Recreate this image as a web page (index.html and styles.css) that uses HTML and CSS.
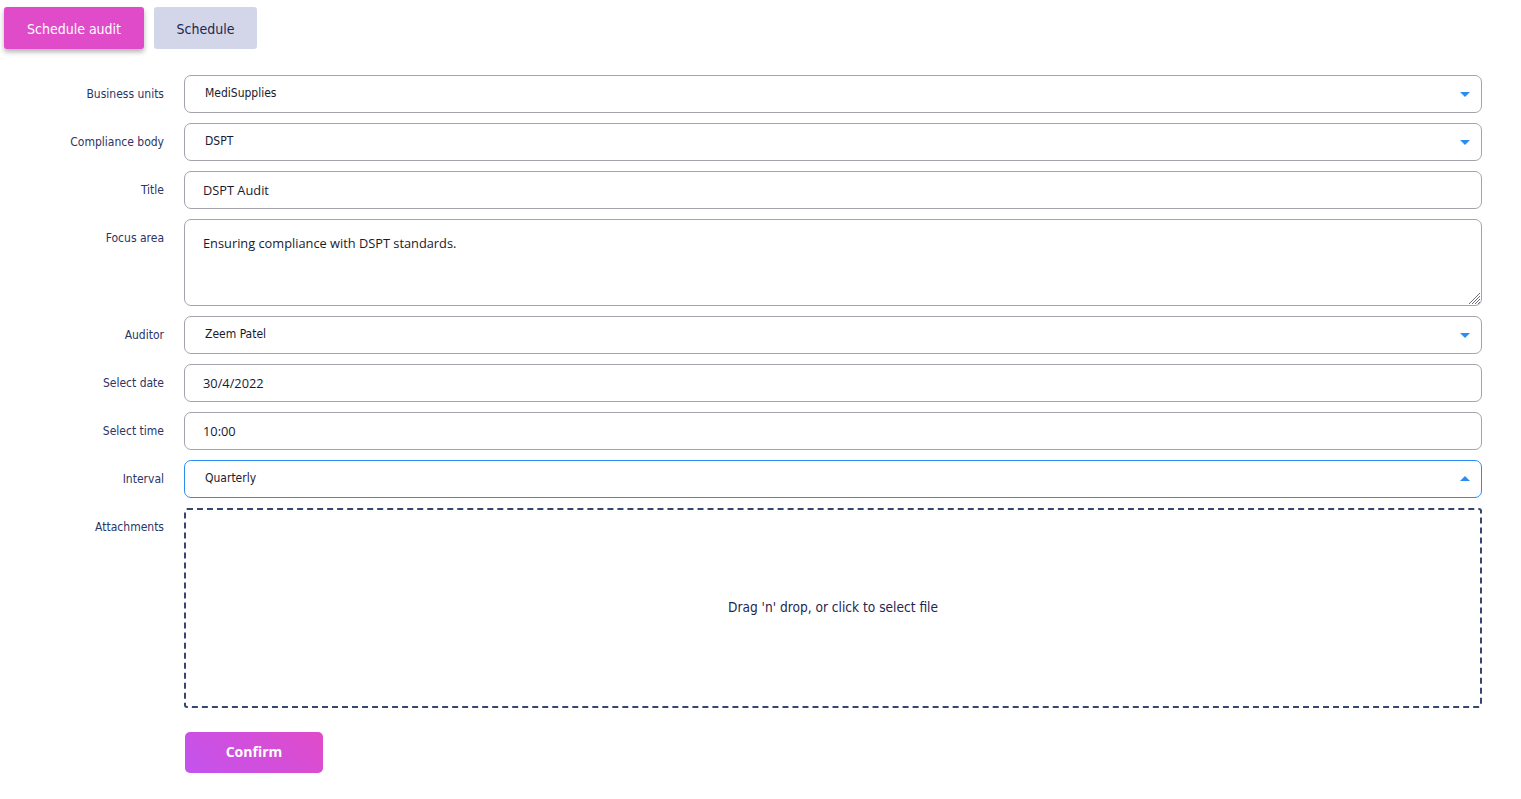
FILE: index.html
```html
<!DOCTYPE html>
<html>
<head>
<meta charset="utf-8">
<link rel="stylesheet" href="styles.css">
</head>
<body>
<div class="page">
  <div class="tabs">
    <button class="tab tab-active">Schedule audit</button>
    <button class="tab">Schedule</button>
  </div>
  <form class="form">
    <div class="row">
      <label class="label">Business units</label>
      <div class="field select"><span class="value">MediSupplies</span><span class="arrow down"></span></div>
    </div>
    <div class="row">
      <label class="label">Compliance body</label>
      <div class="field select"><span class="value">DSPT</span><span class="arrow down"></span></div>
    </div>
    <div class="row">
      <label class="label">Title</label>
      <div class="field input"><span class="ivalue">DSPT Audit</span></div>
    </div>
    <div class="row">
      <label class="label">Focus area</label>
      <div class="field textarea"><span class="ivalue">Ensuring compliance with DSPT standards.</span>
        <svg class="grip" width="14" height="14" viewBox="0 0 14 14"><path d="M13 2 L2 13 M13 5 L5 13 M13 8 L8 13 M13 11 L11 13" stroke="#6f6f7a" stroke-width="1" fill="none"/></svg>
      </div>
    </div>
    <div class="row">
      <label class="label">Auditor</label>
      <div class="field select"><span class="value">Zeem Patel</span><span class="arrow down"></span></div>
    </div>
    <div class="row">
      <label class="label">Select date</label>
      <div class="field input"><span class="ivalue">30/4/2022</span></div>
    </div>
    <div class="row">
      <label class="label">Select time</label>
      <div class="field input"><span class="ivalue">10:00</span></div>
    </div>
    <div class="row">
      <label class="label">Interval</label>
      <div class="field select focused"><span class="value">Quarterly</span><span class="arrow up"></span></div>
    </div>
    <div class="row">
      <label class="label">Attachments</label>
      <div class="dropzone">Drag 'n' drop, or click to select file</div>
    </div>
    <div class="row">
      <span class="label"></span>
      <button type="button" class="confirm">Confirm</button>
    </div>
  </form>
</div>
</body>
</html>
```
FILE: styles.css
```css
* { box-sizing: border-box; }
body {
  margin: 0;
  background: #fff;
  font-family: "DejaVu Sans Condensed", "Open Sans", sans-serif;
  color: #2c3566;
}
.page {
  padding: 7px 0 0 4px;
}
.tabs {
  display: flex;
  gap: 10px;
}
.tab {
  height: 42px;
  border: none;
  border-radius: 3px;
  font-family: "DejaVu Sans Condensed", sans-serif;
  font-size: 14px;
  padding: 2px 0 0;
  background: #d3d6e8;
  color: #1f2550;
  cursor: pointer;
}
.tab-active {
  background: #e04bc9;
  color: #fff;
  box-shadow: 0 3px 5px rgba(0,0,0,0.3);
  width: 140px;
}
.tab:not(.tab-active) { width: 103px; }
.form {
  margin-top: 26px;
  display: flex;
  flex-direction: column;
  gap: 10px;
  padding-right: 39px;
}
.row {
  display: flex;
  align-items: flex-start;
}
.label {
  width: 160px;
  flex: none;
  text-align: right;
  font-size: 12px;
  color: #2c3566;
  padding-top: 12px;
  margin-right: 20px;
}
.field {
  flex: 1;
  border: 1px solid #a3a3ad;
  border-radius: 7px;
  height: 38px;
  display: flex;
  align-items: center;
  position: relative;
  color: #1a1a2e;
}
.select .value {
  padding-left: 20px;
  font-size: 12px;
  flex: 1;
  margin-top: -2px;
}
.input .ivalue, .textarea .ivalue {
  padding-left: 18px;
  font-family: "Open Sans", sans-serif;
  font-size: 12.8px;
}
.textarea {
  height: 87px;
  align-items: flex-start;
  padding-top: 14px;
}
.grip {
  position: absolute;
  right: 0;
  bottom: 0;
}
.focused {
  border-color: #2a8ef0;
}
.arrow {
  width: 0;
  height: 0;
  border-left: 5px solid transparent;
  border-right: 5px solid transparent;
  margin-right: 11px;
}
.arrow.down { border-top: 5px solid #2a8ef0; margin-top: 0; }
.arrow.up { border-bottom: 5px solid #2a8ef0; margin-top: -2px; }
.dropzone {
  flex: 1;
  height: 200px;
  border: 2px dashed #36476f;
  border-radius: 3px;
  display: flex;
  align-items: center;
  justify-content: center;
  font-size: 13.6px;
  color: #1f2550;
  padding-bottom: 3px;
}
.confirm {
  margin-top: 14px;
  margin-left: 1px;
  width: 138px;
  height: 41px;
  border: none;
  border-radius: 5px;
  background: linear-gradient(45deg, #c353ee, #e04bc9);
  color: #fff;
  font-family: "Open Sans", sans-serif;
  font-weight: 700;
  font-size: 14px;
  padding: 0 0 2px;
}
```
